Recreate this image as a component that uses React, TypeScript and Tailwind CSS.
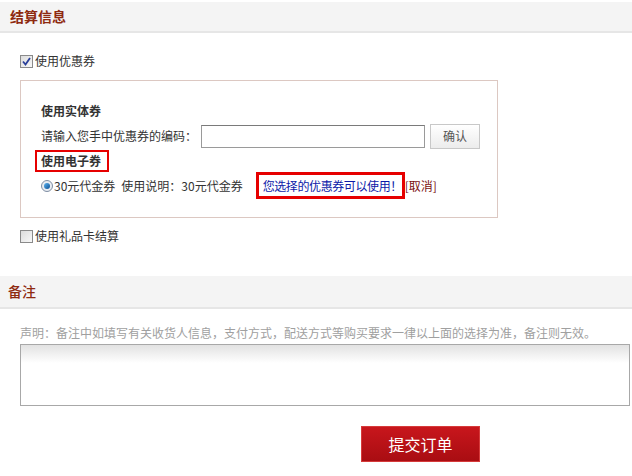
import React from "react";

const font = { fontFamily: '"Noto Sans CJK SC", "Noto Sans", sans-serif' };

function CheckBox({ checked }: { checked?: boolean }) {
  return (
    <span className="inline-flex items-center justify-center w-[13px] h-[13px] border border-[#8a8a8a] bg-gradient-to-br from-[#dcdcdc] to-[#f8f8f8] mr-[2px] shrink-0">
      {checked && (
        <svg width="9" height="9" viewBox="0 0 9 9">
          <path d="M1 4.5 L3.5 7.5 L8 1" fill="none" stroke="#2a3f9a" strokeWidth="1.8" />
        </svg>
      )}
    </span>
  );
}

function Radio() {
  return (
    <span className="inline-flex items-center justify-center w-[12px] h-[12px] rounded-full border border-[#7f8ea3] bg-[#e8ecf2] mr-[1px] shrink-0">
      <span className="w-[6px] h-[6px] rounded-full bg-gradient-to-br from-[#5ab4f0] to-[#0c4f94]" />
    </span>
  );
}

export default function App() {
  return (
    <div className="w-[632px] h-[476px] bg-white text-[12px] text-[#333] overflow-hidden" style={font}>
      <div className="mt-[2px] h-[31px] bg-[#f4f4f4] border-b-2 border-[#e6e6e6] pl-[10px] flex items-center">
        <span className="text-[14px] font-bold text-[#8e2a10]">结算信息</span>
      </div>

      <div className="mt-[18px] pl-[20px] h-[20px] flex items-center">
        <CheckBox checked />
        <span>使用优惠券</span>
      </div>

      <div className="mt-[9px] ml-[20px] w-[478px] h-[138px] border border-[#dcc8c2] pt-[20px] pl-[20px] pr-[17px]">
        <div className="h-[20px] flex items-center font-bold">使用实体券</div>
        <div className="mt-[2px] h-[26px] flex items-center">
          <span>请输入您手中优惠券的编码：</span>
          <input type="text" className="ml-[4px] w-[224px] h-[23px] border border-[#9a9a9a] border-t-[#7a7a7a] bg-white outline-none" />
          <button className="ml-[5px] w-[50px] h-[25px] border border-[#c8c8c8] bg-gradient-to-b from-white to-[#ececec] text-[#555]">
            确认
          </button>
        </div>
        <div className="mt-[1px] -ml-[6px] w-[74px] h-[22px] border-2 border-[#e60000] flex items-center pl-[4px] font-bold">
          使用电子券
        </div>
        <div className="h-[27px] flex items-center whitespace-nowrap">
          <Radio />
          <span>30元代金券</span>
          <span className="ml-[6px]">使用说明：30元代金券</span>
          <span className="ml-[13px] w-[149px] h-[27px] border-[3px] border-[#e60000] flex items-center pl-[4px] tracking-[-0.4px] text-[#0b1aa8] overflow-hidden">
            您选择的优惠券可以使用！
          </span>
          <span className="text-[#7a1010]">[取消]</span>
        </div>
      </div>

      <div className="mt-[8px] pl-[20px] h-[20px] flex items-center">
        <CheckBox />
        <span>使用礼品卡结算</span>
      </div>

      <div className="mt-[30px] h-[33px] bg-[#f4f4f4] border-b-2 border-[#e6e6e6] pl-[8px] flex items-center">
        <span className="text-[14px] font-medium text-[#8e2a10]">备注</span>
      </div>

      <div className="mt-[14px] pl-[20px] h-[20px] flex items-center text-[#a0a0a0]">
        声明：备注中如填写有关收货人信息，支付方式，配送方式等购买要求一律以上面的选择为准，备注则无效。
      </div>
      <div className="ml-[20px] mt-[1px] w-[610px] h-[62px] border border-[#a8a8a8] bg-gradient-to-b from-[#e2e2e2] via-white via-[30%] to-white" />

      <div className="mt-[20px] pl-[361px]">
        <button className="w-[119px] h-[36px] border border-[#d63a3a] bg-gradient-to-b from-[#c8161c] to-[#a90d12] text-white text-[16px]">
          提交订单
        </button>
      </div>
    </div>
  );
}
